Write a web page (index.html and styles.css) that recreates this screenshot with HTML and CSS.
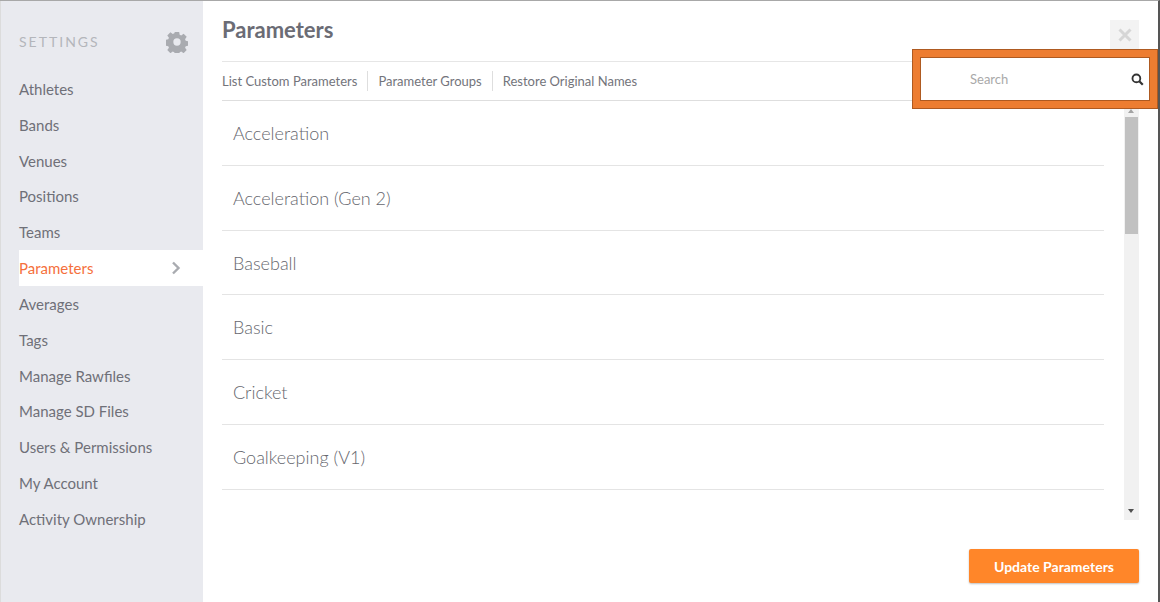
FILE: index.html
```html
<!DOCTYPE html>
<html lang="en">
<head>
    <meta charset="UTF-8">
    <title>Parameters</title>
    <link rel="stylesheet" href="styles.css">
</head>
<body>
    <div class="container">
        <div class="sidebar">
            <div class="sidebar-head">
                <span class="sidebar-title">SETTINGS</span>
                <svg class="gear" viewBox="0 0 24 24" width="22" height="22"><path fill="#a9abb0" fill-rule="evenodd" d="M9.6 1h4.8l.5 3.1 1.7.7 2.6-1.8 3.4 3.4-1.8 2.6.7 1.7 3 .5v4.8l-3 .5-.7 1.7 1.8 2.6-3.4 3.4-2.6-1.8-1.7.7-.5 3H9.6l-.5-3-1.7-.7-2.6 1.8-3.400-3.400 1.800-2.600-.7-1.700-3-.5V9.600l3-.5.7-1.700L1.400 4.800 4.800 1.400l2.600 1.800 1.700-.7zM12 8a4 4 0 1 0 0 8 4 4 0 0 0 0-8z"/></svg>
            </div>
            <ul class="nav">
                <li>Athletes</li>
                <li>Bands</li>
                <li>Venues</li>
                <li>Positions</li>
                <li>Teams</li>
                <li class="active">Parameters
                    <svg viewBox="0 0 10 14" width="10" height="14"><path d="M2 1.500 7.500 7 2 12.500" fill="none" stroke="#a9abb0" stroke-width="2.400"/></svg>
                </li>
                <li>Averages</li>
                <li>Tags</li>
                <li>Manage Rawfiles</li>
                <li>Manage SD Files</li>
                <li>Users &amp; Permissions</li>
                <li>My Account</li>
                <li>Activity Ownership</li>
            </ul>
        </div>

        <div class="main">
            <div class="main-head">
                <h1>Parameters</h1>
                <div class="close">
                    <svg viewBox="0 0 14 14" width="14" height="14"><path d="M1.500 1.500l11 11M12.500 1.500l-11 11" stroke="#d6d6d6" stroke-width="3"/></svg>
                </div>
            </div>
            <div class="tabs">
                <a>List Custom Parameters</a>
                <a>Parameter Groups</a>
                <a>Restore Original Names</a>
            </div>
            <div class="list-wrap">
                <ul class="list">
                    <li>Acceleration</li>
                    <li>Acceleration (Gen 2)</li>
                    <li>Baseball</li>
                    <li>Basic</li>
                    <li>Cricket</li>
                    <li>Goalkeeping (V1)</li>
                </ul>
                <div class="scrollbar">
                    <span class="arrow up"></span>
                    <div class="thumb"></div>
                    <span class="arrow down"></span>
                </div>
            </div>
            <div class="footer">
                <button>Update Parameters</button>
            </div>
        </div>

        <!-- orange highlight around the search box -->
        <div class="highlight">
            <div class="search">
                <span>Search</span>
                <svg viewBox="0 0 14 14" width="13" height="13"><circle cx="5.800" cy="5.800" r="4.200" fill="none" stroke="#333" stroke-width="2"/><path d="M8.900 8.900l3.800 3.800" stroke="#333" stroke-width="2.400"/></svg>
            </div>
        </div>
    </div>
</body>
</html>
```

FILE: styles.css
```css
* {
    box-sizing: border-box;
}

body {
    margin: 0;
    font-family: Lato, "Open Sans", sans-serif;
    background-color: #ffffff;
    color: #6f7078;
}

.container {
    position: relative;
    display: flex;
    width: 1160px;
    height: 602px;
    overflow: hidden;
    border-top: 1px solid #a8a8a8;
    border-right: 2px solid #555;
}

.sidebar {
    width: 203px;
    flex-shrink: 0;
    padding-left: 19px;
    background-color: #e9eaef;
    border-left: 1px solid #dcdcdc;
    margin-left: 0;
}

.sidebar-head {
    display: flex;
    justify-content: space-between;
    align-items: center;
    height: 39px;
    margin: 21px 15px 0 -1px;
}

.sidebar-title {
    font-size: 14px;
    letter-spacing: 2px;
    color: #b4b6bb;
}

.nav {
    list-style: none;
    margin: 10px 0 0 -1px;
    padding: 0;
}

.nav li {
    display: flex;
    align-items: center;
    justify-content: space-between;
    height: 35.830px;
    padding-right: 22px;
    font-size: 15px;
    color: #6f7078;
}

.nav li.active {
    background-color: #ffffff;
    color: #f5703c;
}

.main {
    flex: 1;
    padding: 0 19px 0 19px;
}

.main-head {
    display: flex;
    justify-content: space-between;
    height: 60px;
}

h1 {
    margin: 14px 0 0;
    font-size: 22px;
    line-height: 30px;
    font-weight: 700;
    color: #6b6c75;
}

.close {
    display: flex;
    align-items: center;
    justify-content: center;
    width: 29px;
    height: 29px;
    margin-top: 19px;
    background-color: #f3f3f3;
}

.tabs {
    display: flex;
    align-items: center;
    height: 40px;
    border-top: 1px solid #e6e6e6;
    border-bottom: 1px solid #dedede;
}

.tabs a {
    font-size: 13px;
    line-height: 20px;
    padding-right: 10px;
    margin-right: 10px;
    border-right: 1px solid #dedede;
    color: #73747b;
}

.tabs a:last-child {
    border-right: none;
}

.list-wrap {
    display: flex;
    justify-content: space-between;
    height: 419px;
}

.list {
    list-style: none;
    width: 882px;
    margin: 0;
    padding: 0;
}

.list li {
    display: flex;
    align-items: center;
    height: 64.830px;
    padding-left: 11px;
    font-size: 18px;
    font-weight: 300;
    color: #66676e;
    border-bottom: 1px solid #e4e4e4;
}

.scrollbar {
    position: relative;
    width: 15px;
    background-color: #f1f1f1;
}

.thumb {
    position: absolute;
    top: 16px;
    left: 1px;
    width: 13px;
    height: 117px;
    background-color: #c1c1c1;
}

.arrow {
    position: absolute;
    left: 4px;
    width: 0;
    height: 0;
    border-left: 3.500px solid transparent;
    border-right: 3.500px solid transparent;
}

.arrow.up {
    top: 8px;
    border-bottom: 4px solid #a3a3a3;
}

.arrow.down {
    bottom: 7px;
    border-top: 4px solid #505050;
}

.footer {
    display: flex;
    justify-content: flex-end;
    padding-top: 29px;
}

button {
    width: 170px;
    height: 34px;
    border: none;
    border-radius: 2px;
    background-color: #ff8629;
    color: #ffffff;
    font-family: Lato, sans-serif;
    font-size: 14px;
    font-weight: 700;
    box-shadow: 0 1px 2px rgba(0, 0, 0, 0.25);
}

.highlight {
    position: absolute;
    left: 912px;
    top: 48px;
    width: 246px;
    height: 60px;
    padding: 7px;
    background-color: #ed7d31;
    border: 1px solid #ae5a21;
}

.search {
    display: flex;
    align-items: center;
    justify-content: space-between;
    height: 100%;
    padding: 0 5px 0 49px;
    background-color: #ffffff;
    border: 1px solid #ae5a21;
    outline: 1px solid #ffffff;
    outline-offset: -2px;
}

.search span {
    font-size: 13px;
    color: #a9a9a9;
}
```
